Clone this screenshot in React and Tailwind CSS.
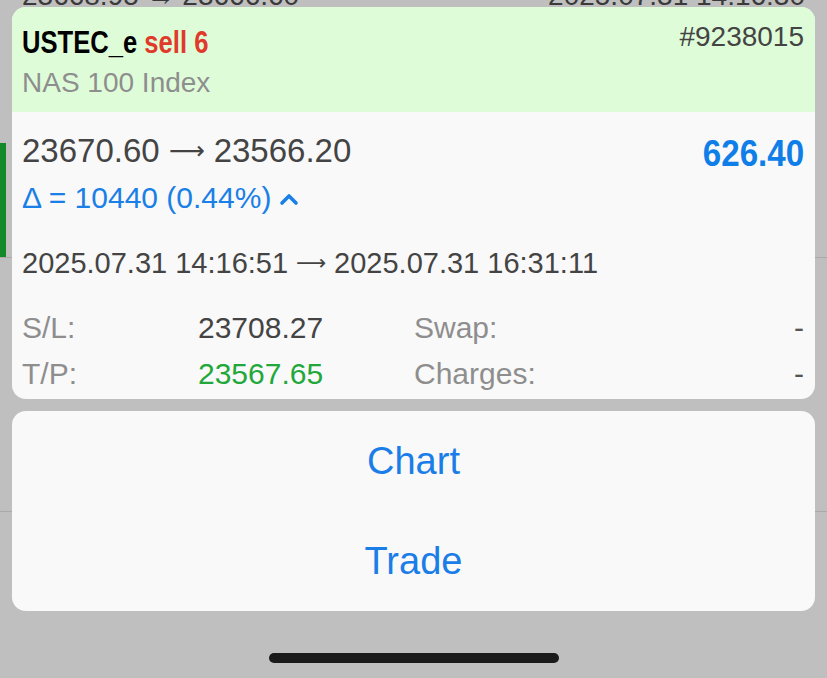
const sans = { fontFamily: '"Liberation Sans", Arial, sans-serif' }
const dejavu = { fontFamily: '"DejaVu Sans", sans-serif' }

function Arrow({ cls }) {
  return (
    <span className={cls} style={dejavu}>⟶</span>
  )
}

function Background() {
  return (
    <div className="h-[678px] overflow-hidden bg-[#bfbfbf] text-[#3a3a3a]" style={sans}>
      <div className="flex h-[258px] border-b border-[#a9a9a9]">
        <div className="self-end w-[6px] h-[114px] bg-[#14892a]" />
        <div className="flex-1 flex justify-between pl-[16px] pr-[22px] -mt-[20px] text-[28px] leading-[32px]">
          <span>23668.95 → 23666.60</span>
          <span>2025.07.31 14:16:30</span>
        </div>
      </div>
      <div className="h-[254px] border-b border-[#a9a9a9]" />
    </div>
  )
}

function InfoRow({ label, value, valueClass, label2, value2 }) {
  return (
    <>
      <span className="text-[#8e8e8e]">{label}</span>
      <span className={valueClass}>{value}</span>
      <span className="text-[#8e8e8e]">{label2}</span>
      <span className="text-[#555] text-right">{value2}</span>
    </>
  )
}

function PositionCard() {
  return (
    <div className="rounded-[14px] overflow-hidden bg-[#f9f9f9]">
      <div className="h-[105px] bg-[#dffcd9] pt-[17px] pl-[10px] pr-[11px]">
        <div className="flex justify-between items-start">
          <span className="inline-block origin-left scale-x-[0.8] whitespace-nowrap text-[32px] leading-[36px] font-bold">
            <span className="text-black">USTEC_e</span>{' '}
            <span className="text-[#e03a2b]">sell 6</span>
          </span>
          <span className="text-[28px] leading-[26px] text-[#444]">#9238015</span>
        </div>
        <div className="mt-[7px] text-[28px] leading-[32px] text-[#8e8e8e]">NAS 100 Index</div>
      </div>
      <div className="pt-[20px] pl-[10px] pr-[11px] pb-[2px]">
        <div className="flex justify-between items-start">
          <span className="flex items-center text-[33px] leading-[38px] text-[#444] whitespace-nowrap">
            23670.60<Arrow cls="w-[54px] text-center text-[25px]" />23566.20
          </span>
          <span className="mt-[5px] inline-block origin-right scale-x-[0.92] text-[36px] leading-[33px] font-bold text-[#0f7ee8]">
            626.40
          </span>
        </div>
        <div className="mt-[10px] flex items-center gap-[8px] text-[30px] leading-[36px] text-[#1a7fe6]">
          <span>Δ = 10440 (0.44%)</span>
          <svg width="20" height="14" viewBox="0 0 20 14" className="mt-[2px]">
            <polyline points="3,11 10,4 17,11" fill="none" stroke="#1a7fe6" strokeWidth="3.6" strokeLinecap="round" strokeLinejoin="round" />
          </svg>
        </div>
        <div className="mt-[29px] flex items-center text-[29px] leading-[36px] text-[#444] whitespace-nowrap">
          2025.07.31 14:16:51<Arrow cls="w-[46px] text-center text-[21px]" />2025.07.31 16:31:11
        </div>
        <div className="mt-[24px] grid grid-cols-[176px_216px_1fr_auto] text-[30px] leading-[46px]">
          <InfoRow label="S/L:" value="23708.27" valueClass="text-[#444]" label2="Swap:" value2="-" />
          <InfoRow label="T/P:" value="23567.65" valueClass="text-[#22a83a]" label2="Charges:" value2="-" />
        </div>
      </div>
    </div>
  )
}

function ActionSheet() {
  return (
    <div className="mt-[12px] rounded-[14px] bg-[#f9f9f9] flex flex-col">
      {['Chart', 'Trade'].map((a) => (
        <button key={a} className="h-[100px] flex items-center justify-center text-[38px] text-[#1a7de8]">
          {a}
        </button>
      ))}
    </div>
  )
}

export default function App() {
  return (
    <div className="relative w-[827px] h-[678px] overflow-hidden">
      <Background />
      <div className="absolute inset-0 px-[12px] pt-[7px] flex flex-col" style={sans}>
        <PositionCard />
        <ActionSheet />
        <div className="mt-[42px] self-center w-[290px] h-[10px] rounded-full bg-[#1a1a1a]" />
      </div>
    </div>
  )
}
